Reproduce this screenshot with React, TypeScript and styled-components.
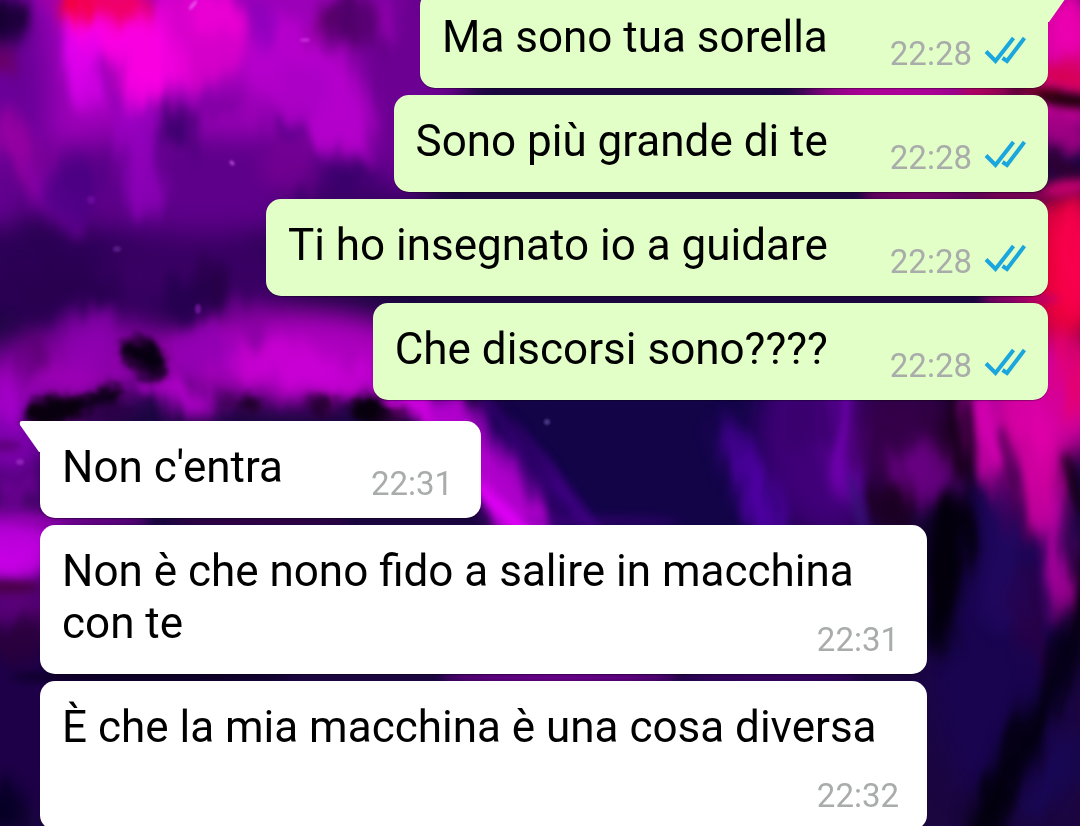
import React from "react";
import styled, { createGlobalStyle, css } from "styled-components";

const GlobalStyle = createGlobalStyle`
  *, *::before, *::after { box-sizing: border-box; }
  body { margin: 0; background: #1b0640; overflow: hidden; }
`;

const Page = styled.div`
  display: grid;
  grid-template: minmax(0, 1fr) / minmax(0, 1fr);
  height: 100vh;
  overflow: hidden;
  font-family: Roboto, "Liberation Sans", sans-serif;
`;

const Backdrop = styled.svg`
  grid-area: 1 / 1;
  width: 100%;
  height: 100%;
`;

/* The list is scrolled a little, so the first bubble starts above the window. */
const MessageList = styled.ol`
  grid-area: 1 / 1;
  z-index: 1;
  display: flex;
  flex-direction: column;
  gap: 7px;
  margin: -9px 0 0;
  padding: 0 32px 0 40px;
  list-style: none;
`;

const Bubble = styled.li<{ $sent: boolean; $tail: boolean; $newGroup: boolean }>`
  position: relative;
  display: flow-root;
  flex-shrink: 0;
  align-self: ${(p) => (p.$sent ? "flex-end" : "flex-start")};
  max-width: 88%;
  margin-top: ${(p) => (p.$newGroup ? 14 : 0)}px;
  padding: 20px ${(p) => (p.$sent ? 22 : 28)}px 15px 22px;
  border-radius: 15px;
  background: ${(p) => (p.$sent ? "#e1ffc7" : "#ffffff")};
  box-shadow: 0 1px 1px rgba(0, 0, 0, 0.35);
  ${(p) =>
    p.$tail &&
    css`
      border-top-${p.$sent ? "right" : "left"}-radius: 0;
    `}
`;

const Tail = styled.svg<{ $sent: boolean }>`
  position: absolute;
  top: 0;
  ${(p) => (p.$sent ? "left: 100%; transform: scaleX(-1);" : "right: 100%;")}
  width: 21px;
  height: 32px;
  fill: ${(p) => (p.$sent ? "#e1ffc7" : "#ffffff")};
`;

const Text = styled.span`
  color: #000000;
  font-size: 44px;
  line-height: 52px;
`;

const Meta = styled.span<{ $sent: boolean }>`
  float: right;
  display: flex;
  align-items: flex-start;
  gap: 12px;
  margin-left: ${(p) => (p.$sent ? 62 : 88)}px;
  padding-top: 23px;
`;

const Time = styled.time`
  color: #a9acab;
  font-size: 33px;
  line-height: 39px;
`;

const ReadMark = styled.svg`
  width: 42px;
  height: 30px;
  fill: none;
  stroke: #1ba6dd;
  stroke-width: 4;
`;

type Message = { text: string; time: string; sent: boolean; tail?: boolean; newGroup?: boolean };

const messages: Message[] = [
  { text: "Ma sono tua sorella", time: "22:28", sent: true, tail: true },
  { text: "Sono più grande di te", time: "22:28", sent: true },
  { text: "Ti ho insegnato io a guidare", time: "22:28", sent: true },
  { text: "Che discorsi sono????", time: "22:28", sent: true },
  { text: "Non c'entra", time: "22:31", sent: false, tail: true, newGroup: true },
  { text: "Non è che nono fido a salire in macchina con te", time: "22:31", sent: false },
  { text: "È che la mia macchina è una cosa diversa", time: "22:32", sent: false },
];

/* Paint strokes of the wallpaper: cx, cy, rx, ry, rotation, colour, opacity. */
type Stroke = [number, number, number, number, number, string, number];

const washes: Stroke[] = [
  [210, 60, 260, 120, 0, "#9c00b8", 1],
  [0, 100, 50, 130, 0, "#6a0098", 1],
  [405, 80, 50, 120, 0, "#6c0092", 1],
  [200, 185, 210, 50, 0, "#5e008a", 1],
  [70, 275, 150, 46, 0, "#2c0056", 1],
  [200, 275, 100, 38, 0, "#3a0064", 1],
  [340, 200, 60, 26, 0, "#3c0068", 1],
  [60, 375, 120, 46, -15, "#8a00a8", 1],
  [290, 355, 130, 46, 0, "#ac00be", 1],
  [10, 440, 40, 40, 0, "#8000b0", 1],
  [10, 545, 60, 36, 0, "#bc00dc", 1],
  [20, 610, 60, 20, 0, "#620080", 1],
  [20, 720, 60, 90, 0, "#1e0048", 1],
  [640, 460, 180, 100, 0, "#130448", 1],
  [820, 450, 60, 90, -12, "#400078", 1],
  [910, 440, 60, 60, 0, "#340048", 1],
  [1000, 640, 70, 170, 0, "#190450", 1],
  [1060, 60, 50, 80, 0, "#d000a0", 1],
  [1065, 270, 40, 80, 0, "#ee003c", 1],
  [1045, 400, 65, 60, 0, "#d200a0", 1],
  [900, 91, 100, 14, 0, "#f000c0", 1],
];

/* Broad soft strokes, then thin ones with a clearer edge. */
const broadStrokes: Stroke[] = [
  [195, 35, 50, 50, 0, "#dc00cc", 0.9],
  [120, 42, 74, 46, 50, "#fa00e4", 1],
  [84, 70, 18, 44, -18, "#dc00ec", 0.9],
  [138, 64, 28, 44, 0, "#f800e0", 0.9],
  [75, 2, 22, 18, 0, "#f40040", 1],
  [120, 4, 30, 22, 0, "#f00068", 1],
  [212, 12, 24, 26, 0, "#f000d4", 0.8],
  [285, 60, 46, 44, 20, "#bc00d0", 0.8],
  [338, 108, 30, 56, -18, "#b600cc", 0.95],
  [300, 90, 30, 30, 0, "#a800c4", 0.7],
  [258, 24, 15, 24, 0, "#8a00bc", 0.8],
  [352, 24, 24, 32, 0, "#50006a", 1],
  [325, 26, 13, 16, 0, "#5c0068", 0.9],
  [385, 14, 12, 24, 0, "#9800b4", 0.8],
  [6, 20, 20, 24, 0, "#140030", 1],
  [4, 60, 10, 14, 0, "#66004e", 0.9],
  [108, 82, 11, 26, 0, "#7600a0", 0.7],
  [18, 150, 20, 44, -26, "#a000a4", 0.8],
  [52, 195, 16, 50, -38, "#7c00a4", 0.8],
  [138, 155, 18, 70, -6, "#9a00c4", 0.8],
  [178, 128, 22, 22, -30, "#38006a", 0.9],
  [220, 105, 24, 14, 0, "#78009c", 0.7],
  [284, 132, 16, 14, 0, "#580088", 0.8],
  [72, 190, 24, 36, 0, "#440080", 0.7],
  [345, 172, 24, 16, 0, "#38006a", 0.9],
  [290, 168, 26, 30, 0, "#780094", 0.7],
  [215, 288, 18, 30, 0, "#200040", 0.8],
  [182, 298, 18, 26, 0, "#22004c", 0.8],
  [60, 290, 60, 24, 0, "#28004e", 0.7],
  [88, 340, 20, 36, 10, "#9000b4", 0.7],
  [36, 352, 16, 24, 0, "#54006a", 0.7],
  [200, 350, 34, 26, 0, "#8c00b0", 0.7],
  [280, 358, 50, 20, 0, "#cc00d4", 0.8],
  [325, 380, 50, 20, 0, "#cc00d8", 0.8],
  [180, 396, 40, 16, 30, "#b800d0", 0.9],
  [70, 378, 40, 12, -10, "#a000b8", 0.8],
  [250, 325, 14, 24, 0, "#7c0098", 0.6],
  [8, 400, 14, 26, 0, "#ac00d0", 0.8],
  [16, 490, 26, 13, 0, "#7800a0", 0.8],
  [4, 560, 34, 18, 0, "#cc00ea", 0.8],
  [16, 640, 34, 16, 0, "#2a003a", 0.9],
  [4, 808, 22, 24, 0, "#040022", 0.9],
  [425, 412, 60, 15, 26, "#d400e4", 1],
  [492, 472, 28, 96, -36, "#b000cc", 1],
  [530, 475, 12, 90, -38, "#30006c", 0.8],
  [742, 470, 13, 54, -18, "#4c00a0", 0.9],
  [766, 505, 13, 46, -20, "#5400ac", 0.9],
  [842, 440, 15, 64, -4, "#7400b4", 0.9],
  [808, 420, 30, 30, 0, "#38006a", 0.7],
  [922, 472, 32, 34, -20, "#6c0086", 0.9],
  [890, 508, 26, 30, 0, "#1c0020", 0.9],
  [956, 440, 14, 54, -20, "#160018", 0.9],
  [945, 565, 24, 74, 8, "#03000c", 1],
  [935, 630, 18, 24, 0, "#03000c", 0.8],
  [1005, 560, 20, 74, 0, "#220864", 0.7],
  [978, 402, 22, 14, 0, "#b400a4", 0.8],
  [992, 448, 14, 64, -18, "#da00b4", 1],
  [1020, 508, 14, 40, -26, "#480058", 0.9],
  [1042, 470, 20, 72, -10, "#e000a8", 0.9],
  [1057, 560, 12, 62, -2, "#b400a4", 1],
  [1030, 620, 12, 60, -8, "#2c0044", 0.8],
  [1080, 610, 14, 78, 12, "#05000e", 0.9],
  [1030, 730, 16, 116, 28, "#02000e", 0.95],
  [992, 808, 20, 44, 28, "#02000e", 0.95],
  [1056, 670, 16, 40, 22, "#060018", 0.9],
  [1056, 780, 16, 50, 30, "#160858", 0.8],
  [1066, 30, 20, 30, 0, "#ee00b0", 0.9],
  [1062, 76, 26, 14, 0, "#d80048", 0.9],
  [1066, 132, 22, 18, 30, "#a00084", 0.9],
  [1064, 215, 24, 14, -20, "#e00044", 0.8],
  [1072, 260, 14, 56, 0, "#fa0050", 0.9],
  [1074, 380, 14, 44, 0, "#e80068", 0.9],
];

const thinStrokes: Stroke[] = [
  [4, 446, 18, 5, 0, "#500064", 0.8],
  [10, 587, 30, 6, 0, "#44003c", 0.9],
  [146, 386, 7, 9, 0, "#c400e0", 0.7],
  [510, 518, 7, 62, -46, "#e800ff", 0.9],
  [490, 495, 5, 40, -36, "#dc00f0", 0.7],
  [535, 462, 5, 90, -38, "#420088", 0.7],
  [560, 482, 5, 80, -38, "#500098", 0.6],
  [520, 436, 4, 60, -36, "#20004e", 0.7],
  [860, 515, 6, 44, -14, "#381078", 0.8],
  [1009, 460, 5, 36, -14, "#4a0050", 0.7],
  [1074, 485, 6, 34, -16, "#120012", 0.8],
  [1068, 100, 34, 8, 6, "#1c0008", 0.95],
  [1054, 160, 7, 14, 0, "#300034", 0.8],
  [1068, 170, 18, 6, 20, "#300030", 0.9],
  [1066, 188, 24, 8, -10, "#c80070", 0.9],
  [1032, 91, 32, 5, 0, "#500010", 0.9],
  [985, 91, 26, 5, 0, "#d0004c", 0.8],
  [1010, 195, 46, 5, 0, "#a0005c", 0.9],
  [920, 195, 60, 5, 0, "#b00080", 0.8],
  [1020, 299, 40, 5, 0, "#b80078", 0.9],
  [600, 521, 80, 5, 0, "#500090", 0.4],
  [260, 521, 90, 5, 0, "#3c0048", 0.8],
  [80, 521, 70, 5, 0, "#9400b0", 0.8],
  [150, 677, 140, 6, 0, "#0a0022", 1],
  [560, 677, 120, 5, 0, "#8600a4", 0.9],
  [770, 677, 90, 5, 0, "#480074", 0.8],
];

/* Ink blots with a rougher edge. */
const blots: Stroke[] = [
  [143, 354, 23, 15, 20, "#080012", 1],
  [154, 364, 12, 17, 0, "#080012", 0.9],
  [146, 376, 13, 7, 0, "#18002c", 0.7],
  [58, 409, 34, 14, -6, "#08000e", 1],
  [45, 418, 24, 10, 0, "#08000e", 1],
  [104, 397, 22, 11, -16, "#10001c", 1],
  [110, 412, 26, 9, 0, "#280044", 0.8],
  [250, 405, 11, 8, 0, "#1a0022", 0.9],
  [228, 402, 7, 6, 0, "#400050", 0.7],
  [322, 405, 14, 12, 0, "#240030", 0.9],
  [368, 410, 19, 14, 0, "#07000c", 1],
  [392, 417, 16, 9, 0, "#14001c", 0.8],
];

const specks: Stroke[] = [
  [232, 163, 3, 2, 50, "#b848d8", 0.8],
  [305, 40, 5, 2, 0, "#d838e8", 0.6],
  [193, 5, 2, 6, 40, "#ee60f4", 0.7],
  [117, 249, 4, 3, 0, "#6a2a9c", 0.6],
  [198, 309, 3, 5, 0, "#8c20b8", 0.6],
  [91, 200, 4, 4, 0, "#8010b4", 0.5],
  [547, 422, 3, 3, 0, "#4a3c88", 0.9],
  [20, 462, 4, 3, 0, "#b040d0", 0.5],
];

const Paint = ({ items, filter }: { items: Stroke[]; filter: string }) => (
  <g filter={`url(#${filter})`}>
    {items.map(([cx, cy, rx, ry, angle, fill, opacity], i) => (
      <ellipse
        key={i}
        cx={cx}
        cy={cy}
        rx={rx}
        ry={ry}
        transform={`rotate(${angle} ${cx} ${cy})`}
        fill={fill}
        opacity={opacity}
      />
    ))}
  </g>
);

const Wallpaper = () => (
  <Backdrop viewBox="0 0 1080 826" preserveAspectRatio="xMidYMid slice" aria-hidden="true">
    <defs>
      <filter id="wash" filterUnits="userSpaceOnUse" x="-80" y="-80" width="1240" height="986" colorInterpolationFilters="sRGB">
        <feGaussianBlur stdDeviation="14" />
      </filter>
      <filter id="broad" filterUnits="userSpaceOnUse" x="-60" y="-60" width="1200" height="946" colorInterpolationFilters="sRGB">
        <feGaussianBlur stdDeviation="8" result="soft" />
        <feTurbulence type="fractalNoise" baseFrequency="0.045 0.014" numOctaves="2" seed="4" result="noise" />
        <feDisplacementMap in="soft" in2="noise" scale="34" xChannelSelector="R" yChannelSelector="G" />
        <feGaussianBlur stdDeviation="2" />
      </filter>
      <filter id="thin" filterUnits="userSpaceOnUse" x="-60" y="-60" width="1200" height="946" colorInterpolationFilters="sRGB">
        <feGaussianBlur stdDeviation="4" />
      </filter>
      <filter id="blot" filterUnits="userSpaceOnUse" x="-20" y="300" width="460" height="160" colorInterpolationFilters="sRGB">
        <feGaussianBlur stdDeviation="4" result="soft" />
        <feTurbulence type="fractalNoise" baseFrequency="0.07" numOctaves="2" seed="7" result="noise" />
        <feDisplacementMap in="soft" in2="noise" scale="12" xChannelSelector="R" yChannelSelector="G" />
        <feGaussianBlur stdDeviation="1" />
      </filter>
      <filter id="speck" filterUnits="userSpaceOnUse" x="0" y="0" width="1080" height="826" colorInterpolationFilters="sRGB">
        <feGaussianBlur stdDeviation="1" />
      </filter>
    </defs>
    <rect width="1080" height="826" fill="#1b0640" />
    <Paint items={washes} filter="wash" />
    <Paint items={broadStrokes} filter="broad" />
    <Paint items={thinStrokes} filter="thin" />
    <Paint items={blots} filter="blot" />
    <Paint items={specks} filter="speck" />
  </Backdrop>
);

const MessageBubble = ({ text, time, sent, tail = false, newGroup = false }: Message) => (
  <Bubble $sent={sent} $tail={tail} $newGroup={newGroup}>
    {tail && (
      <Tail $sent={sent} viewBox="0 0 21 32" aria-hidden="true">
        <path d="M21 0H3Q0 0 1 4L20 31H21Z" />
      </Tail>
    )}
    <Text>{text}</Text>
    <Meta $sent={sent}>
      <Time>{time}</Time>
      {sent && (
        <ReadMark viewBox="0 0 42 30" role="img" aria-label="Letto">
          <path d="M2 17.500L11.500 27L29.500 4M18.500 24L23 27L40.500 4" />
        </ReadMark>
      )}
    </Meta>
  </Bubble>
);

export default function App() {
  return (
    <Page>
      <GlobalStyle />
      <Wallpaper />
      <MessageList>
        {messages.map((message) => (
          <MessageBubble key={message.text} {...message} />
        ))}
      </MessageList>
    </Page>
  );
}
